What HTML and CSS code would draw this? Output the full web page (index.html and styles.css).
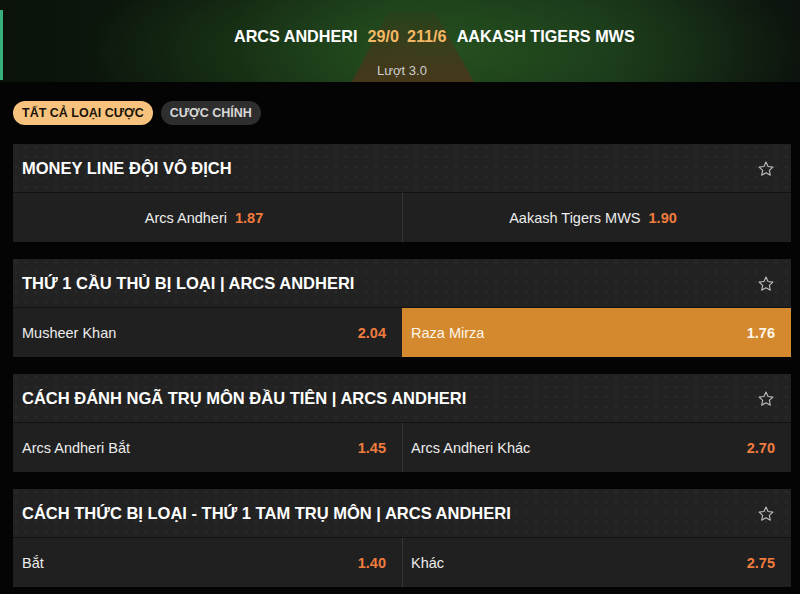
FILE: index.html
```html
<!DOCTYPE html>
<html lang="vi">
<head>
<meta charset="utf-8">
<link rel="stylesheet" href="styles.css">
</head>
<body>
<header class="match">
  <div class="accent"></div>
  <div class="pitch"></div>
  <div class="score-line">
    <div class="side left"><span class="team">ARCS ANDHERI</span><span class="runs">29/0</span></div>
    <div class="side right"><span class="runs">211/6</span><span class="team">AAKASH TIGERS MWS</span></div>
  </div>
  <div class="over">Lượt 3.0</div>
</header>

<nav class="tabs">
  <span class="tab active">TẤT CẢ LOẠI CƯỢC</span>
  <span class="tab">CƯỢC CHÍNH</span>
</nav>

<main class="markets">
  <section class="market">
    <div class="market-head">
      <h2>MONEY LINE ĐỘI VÔ ĐỊCH</h2>
      <svg class="star" viewBox="0 0 24 24"><path d="M12 2.8l2.75 5.9 6.45.75-4.78 4.4 1.3 6.37L12 17l-5.72 3.22 1.3-6.37L2.8 9.45l6.45-.75z"/></svg>
    </div>
    <div class="outcomes">
      <div class="cell centered"><span class="name">Arcs Andheri</span><span class="odd">1.87</span></div>
      <div class="cell centered"><span class="name">Aakash Tigers MWS</span><span class="odd">1.90</span></div>
    </div>
  </section>

  <section class="market">
    <div class="market-head">
      <h2>THỨ 1 CẦU THỦ BỊ LOẠI | ARCS ANDHERI</h2>
      <svg class="star" viewBox="0 0 24 24"><path d="M12 2.8l2.75 5.9 6.45.75-4.78 4.4 1.3 6.37L12 17l-5.72 3.22 1.3-6.37L2.8 9.45l6.45-.75z"/></svg>
    </div>
    <div class="outcomes">
      <div class="cell"><span class="name">Musheer Khan</span><span class="odd">2.04</span></div>
      <div class="cell selected"><span class="name">Raza Mirza</span><span class="odd">1.76</span></div>
    </div>
  </section>

  <section class="market">
    <div class="market-head">
      <h2>CÁCH ĐÁNH NGÃ TRỤ MÔN ĐẦU TIÊN | ARCS ANDHERI</h2>
      <svg class="star" viewBox="0 0 24 24"><path d="M12 2.8l2.75 5.9 6.45.75-4.78 4.4 1.3 6.37L12 17l-5.72 3.22 1.3-6.37L2.8 9.45l6.45-.75z"/></svg>
    </div>
    <div class="outcomes">
      <div class="cell"><span class="name">Arcs Andheri Bắt</span><span class="odd">1.45</span></div>
      <div class="cell"><span class="name">Arcs Andheri Khác</span><span class="odd">2.70</span></div>
    </div>
  </section>

  <section class="market">
    <div class="market-head">
      <h2>CÁCH THỨC BỊ LOẠI - THỨ 1 TAM TRỤ MÔN | ARCS ANDHERI</h2>
      <svg class="star" viewBox="0 0 24 24"><path d="M12 2.8l2.75 5.9 6.45.75-4.78 4.4 1.3 6.37L12 17l-5.72 3.22 1.3-6.37L2.8 9.45l6.45-.75z"/></svg>
    </div>
    <div class="outcomes">
      <div class="cell"><span class="name">Bắt</span><span class="odd">1.40</span></div>
      <div class="cell"><span class="name">Khác</span><span class="odd">2.75</span></div>
    </div>
  </section>
</main>
</body>
</html>
```

FILE: styles.css
```css
* { box-sizing: border-box; }

html, body {
  margin: 0;
  padding: 0;
  background: #040404;
  font-family: "Liberation Sans", Arial, "Noto Sans", sans-serif;
  color: #f2f2f2;
  overflow: hidden;
}

.match {
  position: relative;
  height: 82px;
  padding-top: 26px;
  overflow: hidden;
  background:
    radial-gradient(ellipse 360px 110px at 440px 50px, rgba(40, 88, 32, 0.8), rgba(20, 48, 20, 0) 100%),
    linear-gradient(90deg, #0a120a 0%, #0f1c0f 30%, #183319 50%, #152c18 75%, #0f1a10 92%, #0c140d 100%);
}

.accent {
  position: absolute;
  left: 0;
  top: 10px;
  width: 3px;
  height: 70px;
  background: #37b07d;
}

.pitch {
  position: absolute;
  left: 352px;
  top: 0;
  width: 122px;
  height: 82px;
  clip-path: polygon(30% 14%, 68% 14%, 100% 100%, 0% 100%);
  background: linear-gradient(180deg, rgba(60, 44, 22, 0) 0%, rgba(72, 48, 24, 0.5) 45%, rgba(80, 52, 26, 0.8) 100%);
}

.score-line {
  position: relative;
  display: grid;
  grid-template-columns: 1fr 1fr;
  column-gap: 8px;
  padding-left: 6px;
  font-size: 16.2px;
  font-weight: 700;
  line-height: 20px;
}

.side { display: flex; gap: 10px; }
.side.left { justify-content: flex-end; }
.side.right { justify-content: flex-start; }
.team { color: #ffffff; }
.runs { color: #f3b863; }

.over {
  position: relative;
  margin-top: 17px;
  text-align: center;
  padding-left: 4px;
  font-size: 13px;
  color: #cfcfcf;
  line-height: 16px;
}

.tabs {
  display: flex;
  gap: 8px;
  padding: 19px 13px 0;
}

.tab {
  height: 24px;
  line-height: 24px;
  padding: 0 9px;
  border-radius: 12px;
  font-size: 12.5px;
  font-weight: 700;
  background: #2e2e2e;
  color: #d8d8d8;
}

.tab.active {
  background: #f6c27d;
  color: #1a1208;
}

.markets {
  display: flex;
  flex-direction: column;
  gap: 17px;
  padding: 19px 9px 0 13px;
}

.market {
  background: #1f1f1f;
}

.market-head {
  height: 49px;
  display: flex;
  align-items: center;
  justify-content: space-between;
  padding: 1px 16px 0 9px;
  background-color: #222222;
  background-image: radial-gradient(circle at 3px 3px, #2b2b2b 1.4px, rgba(0,0,0,0) 1.6px);
  background-size: 10px 10px;
  border-bottom: 1px solid #121212;
}

.market-head h2 {
  margin: 0;
  font-size: 16.5px;
  font-weight: 700;
  color: #ffffff;
  letter-spacing: 0;
}

.star {
  width: 18px;
  height: 18px;
  fill: none;
  stroke: #bdbdbd;
  stroke-width: 1.5;
  stroke-linejoin: round;
}

.outcomes {
  display: grid;
  grid-template-columns: 1fr 1fr;
  height: 49px;
}

.cell {
  display: flex;
  align-items: center;
  justify-content: space-between;
  padding: 0 16px 0 9px;
  font-size: 14.5px;
  background: #202020;
}

.cell + .cell {
  border-left: 1px solid #363636;
  padding-left: 8px;
}

.cell.centered {
  justify-content: center;
  gap: 8px;
}

.name { color: #ececec; }

.odd {
  color: #f07c3f;
  font-weight: 700;
}

.cell.selected {
  background: #d4892e;
  border-left-color: #d4892e;
}

.cell.selected .name,
.cell.selected .odd {
  color: #fff6ea;
}
```
